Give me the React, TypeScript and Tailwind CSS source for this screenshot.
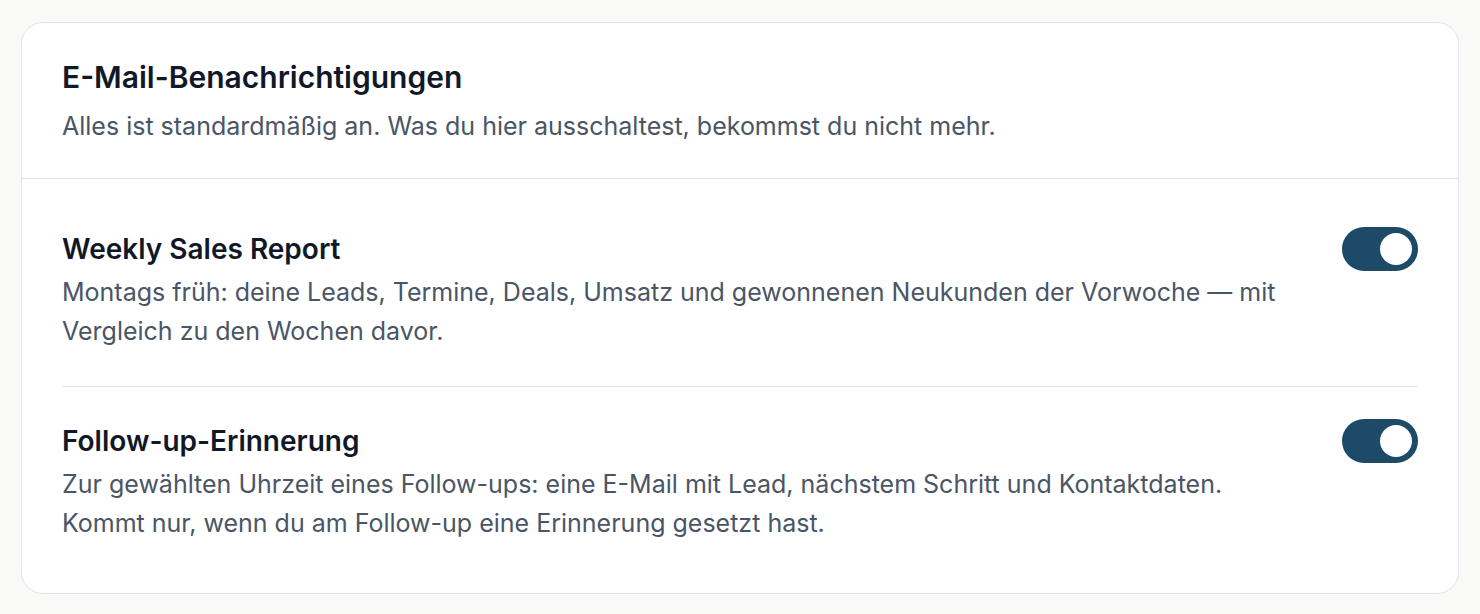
import React, { useState } from "react";

type Item = {
  title: string;
  text: string;
};

const items: Item[] = [
  {
    title: "Weekly Sales Report",
    text: "Montags früh: deine Leads, Termine, Deals, Umsatz und gewonnenen Neukunden der Vorwoche — mit Vergleich zu den Wochen davor.",
  },
  {
    title: "Follow-up-Erinnerung",
    text: "Zur gewählten Uhrzeit eines Follow-ups: eine E-Mail mit Lead, nächstem Schritt und Kontaktdaten. Kommt nur, wenn du am Follow-up eine Erinnerung gesetzt hast.",
  },
];

const Toggle = ({ on, onClick }: { on: boolean; onClick: () => void }) => (
  <button
    type="button"
    onClick={onClick}
    className={`flex h-[44px] w-[76px] shrink-0 items-center rounded-full px-[6px] ${
      on ? "justify-end bg-[#1c4a67]" : "justify-start bg-gray-300"
    }`}
  >
    <span className="h-[32px] w-[32px] rounded-full bg-white" />
  </button>
);

const App = () => {
  const [enabled, setEnabled] = useState<boolean[]>([true, true]);

  return (
    <div className="min-h-screen bg-[#f9f9f8] px-[21px] pt-[22px] font-['Inter',sans-serif]">
      <div className="rounded-[22px] border border-[#e3e4e8] bg-white">
        {/* header */}
        <div className="border-b border-[#e3e4e8] px-10 pt-[36px] pb-[34px]">
          <h1 className="text-[30px] leading-[36px] font-semibold text-[#111827]">
            E-Mail-Benachrichtigungen
          </h1>
          <p className="mt-[13px] text-[25px] leading-[36px] text-[#4a5565]">
            Alles ist standardmäßig an. Was du hier ausschaltest, bekommst du nicht mehr.
          </p>
        </div>

        {/* rows */}
        <div className="px-10 pt-4 pb-[15px]">
          {items.map((item, i) => (
            <div
              key={item.title}
              className={`flex items-start justify-between gap-8 pt-8 pb-[35px] ${
                i < items.length - 1 ? "border-b border-[#e3e4e8]" : ""
              }`}
            >
              <div className="max-w-[1230px]">
                <h2 className="text-[28px] leading-[44px] font-semibold text-[#111827]">
                  {item.title}
                </h2>
                <p className="mt-[2px] text-[25px] leading-[39px] text-[#4a5565]">
                  {item.text}
                </p>
              </div>
              <Toggle
                on={enabled[i]}
                onClick={() =>
                  setEnabled((prev) => prev.map((v, j) => (j === i ? !v : v)))
                }
              />
            </div>
          ))}
        </div>
      </div>
    </div>
  );
};

export default App;
